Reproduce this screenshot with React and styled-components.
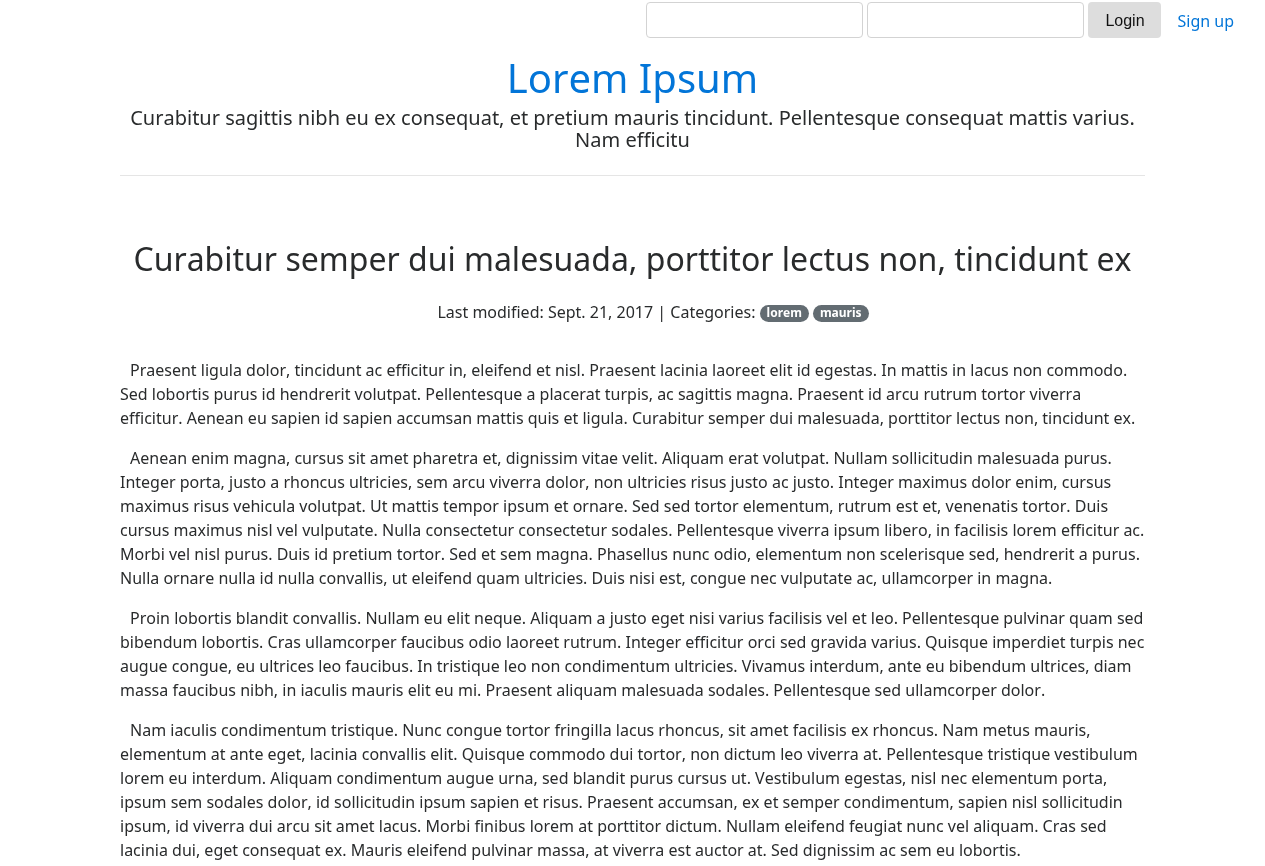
import React from "react";
import styled, { createGlobalStyle } from "styled-components";

const Global = createGlobalStyle`
  html, body { margin: 0; padding: 0; background: #fff; }
  body {
    font-family: "Noto Sans", "DejaVu Sans", sans-serif;
    font-size: 16px;
    line-height: 1.5;
    color: #292b2c;
    font-kerning: none;
  }
  * { box-sizing: border-box; }
`;

const TopBar = styled.div`
  display: flex;
  justify-content: flex-end;
  align-items: flex-start;
  gap: 4px;
  padding: 2px 31px 0 0;
  height: 40px;
`;

const Field = styled.input`
  width: 217px;
  height: 36px;
  border: 1px solid #d3d3d3;
  border-radius: 4px;
  padding: 0 10px;
  font-family: "Noto Sans", sans-serif;
  font-size: 16px;
  color: #292b2c;
  background: #fff;
  outline: none;
  caret-color: #000;
`;

const LoginButton = styled.button`
  height: 36px;
  width: 73px;
  border: none;
  border-radius: 4px;
  background: #dddddd;
  font-family: "Liberation Sans", Arial, sans-serif;
  font-size: 16px;
  color: #111;
  padding: 1px 0 0;
  cursor: pointer;
`;

const NavLink = styled.a`
  color: #0275d8;
  text-decoration: none;
  font-size: 16px;
  margin-left: 12px;
  line-height: 38px;
`;

const Container = styled.div`
  width: 1025px;
  margin: 0 auto;
`;

const Header = styled.header`
  text-align: center;
`;

const SiteTitle = styled.h1`
  margin: 16px 0 7px;
  font-size: 40px;
  font-weight: 400;
  line-height: 44px;
  a { color: #0275d8; text-decoration: none; }
`;

const Tagline = styled.h5`
  margin: 0 0 8px;
  font-size: 20px;
  font-weight: 400;
  line-height: 22px;
`;

const Rule = styled.hr`
  margin: 24px 0 0;
  border: 0;
  border-top: 1px solid rgba(0, 0, 0, 0.1);
`;

const Article = styled.article`
  padding-top: 65px;
`;

const PostTitle = styled.h2`
  margin: 0 0 23px;
  text-align: center;
  font-size: 32px;
  font-weight: 400;
  line-height: 36px;
`;

const Meta = styled.div`
  text-align: center;
  line-height: 24px;
  margin-bottom: 34px;
  padding-left: 41px;
`;

const Badge = styled.span`
  display: inline-block;
  padding: 2px 7px 3px;
  margin-left: 4px;
  font-size: 12px;
  font-weight: 700;
  line-height: 1;
  color: #fff;
  background: #636c72;
  border-radius: 10rem;
  vertical-align: 1px;
  &:first-child { margin-left: 0; }
`;

const Body = styled.div`
  p {
    margin: 0 0 16px;
    text-indent: 10px;
    line-height: 24px;
  }
`;

const paragraphs = [
  "Praesent ligula dolor, tincidunt ac efficitur in, eleifend et nisl. Praesent lacinia laoreet elit id egestas. In mattis in lacus non commodo. Sed lobortis purus id hendrerit volutpat. Pellentesque a placerat turpis, ac sagittis magna. Praesent id arcu rutrum tortor viverra efficitur. Aenean eu sapien id sapien accumsan mattis quis et ligula. Curabitur semper dui malesuada, porttitor lectus non, tincidunt ex.",
  "Aenean enim magna, cursus sit amet pharetra et, dignissim vitae velit. Aliquam erat volutpat. Nullam sollicitudin malesuada purus. Integer porta, justo a rhoncus ultricies, sem arcu viverra dolor, non ultricies risus justo ac justo. Integer maximus dolor enim, cursus maximus risus vehicula volutpat. Ut mattis tempor ipsum et ornare. Sed sed tortor elementum, rutrum est et, venenatis tortor. Duis cursus maximus nisl vel vulputate. Nulla consectetur consectetur sodales. Pellentesque viverra ipsum libero, in facilisis lorem efficitur ac. Morbi vel nisl purus. Duis id pretium tortor. Sed et sem magna. Phasellus nunc odio, elementum non scelerisque sed, hendrerit a purus. Nulla ornare nulla id nulla convallis, ut eleifend quam ultricies. Duis nisi est, congue nec vulputate ac, ullamcorper in magna.",
  "Proin lobortis blandit convallis. Nullam eu elit neque. Aliquam a justo eget nisi varius facilisis vel et leo. Pellentesque pulvinar quam sed bibendum lobortis. Cras ullamcorper faucibus odio laoreet rutrum. Integer efficitur orci sed gravida varius. Quisque imperdiet turpis nec augue congue, eu ultrices leo faucibus. In tristique leo non condimentum ultricies. Vivamus interdum, ante eu bibendum ultrices, diam massa faucibus nibh, in iaculis mauris elit eu mi. Praesent aliquam malesuada sodales. Pellentesque sed ullamcorper dolor.",
  "Nam iaculis condimentum tristique. Nunc congue tortor fringilla lacus rhoncus, sit amet facilisis ex rhoncus. Nam metus mauris, elementum at ante eget, lacinia convallis elit. Quisque commodo dui tortor, non dictum leo viverra at. Pellentesque tristique vestibulum lorem eu interdum. Aliquam condimentum augue urna, sed blandit purus cursus ut. Vestibulum egestas, nisl nec elementum porta, ipsum sem sodales dolor, id sollicitudin ipsum sapien et risus. Praesent accumsan, ex et semper condimentum, sapien nisl sollicitudin ipsum, id viverra dui arcu sit amet lacus. Morbi finibus lorem at porttitor dictum. Nullam eleifend feugiat nunc vel aliquam. Cras sed lacinia dui, eget consequat ex. Mauris eleifend pulvinar massa, at viverra est auctor at. Sed dignissim ac sem eu lobortis.",
];

export default function App() {
  return (
    <>
      <Global />
      <TopBar>
        <Field type="text" autoFocus />
        <Field type="password" />
        <LoginButton>Login</LoginButton>
        <NavLink href="#">Sign up</NavLink>
      </TopBar>
      <Container>
        <Header>
          <SiteTitle><a href="#">Lorem Ipsum</a></SiteTitle>
          <Tagline>
            Curabitur sagittis nibh eu ex consequat, et pretium mauris tincidunt. Pellentesque consequat mattis varius. Nam efficitu
          </Tagline>
          <Rule />
        </Header>
        <Article>
          <PostTitle>Curabitur semper dui malesuada, porttitor lectus non, tincidunt ex</PostTitle>
          <Meta>
            Last modified: Sept. 21, 2017 | Categories: <Badge>lorem</Badge><Badge>mauris</Badge>
          </Meta>
          <Body>
            {paragraphs.map((p, i) => (
              <p key={i}>{p}</p>
            ))}
          </Body>
        </Article>
      </Container>
    </>
  );
}
